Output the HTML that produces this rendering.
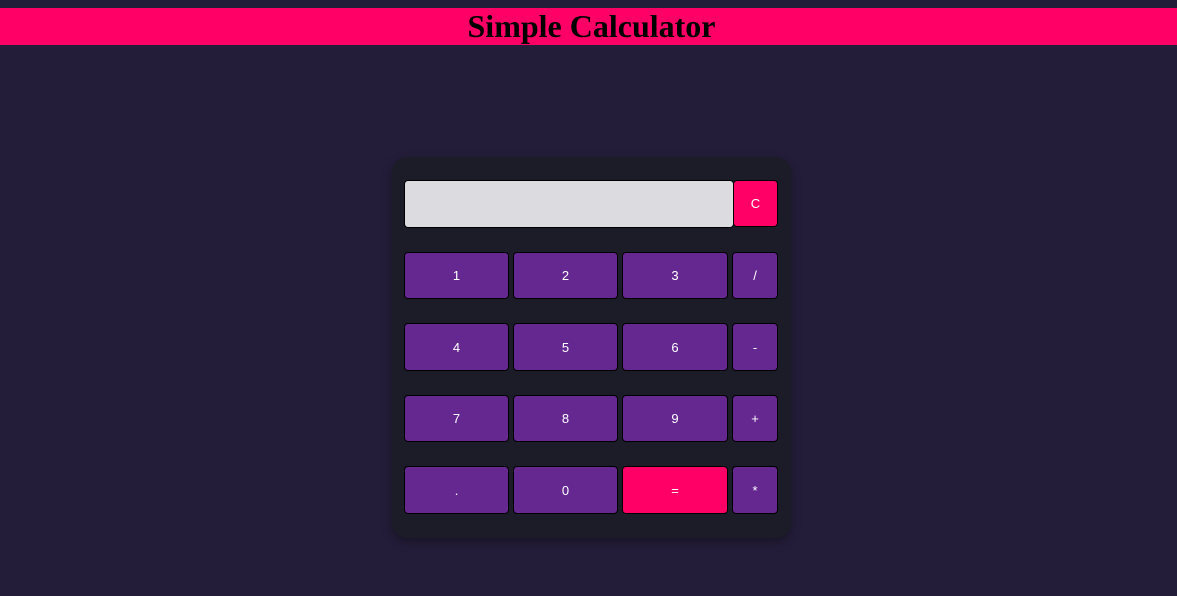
<!DOCTYPE html>
<html><head><style>
body{margin:0;background:#241d3a;width:1177px;height:596px;overflow:hidden;position:relative;font-family:"Liberation Sans",sans-serif}
.hd{position:absolute;left:0;top:8px;width:1177px;height:37px;background:#ff0066;text-align:center;font:bold 32px/37px "Liberation Serif",serif;color:#000;padding-left:6px;box-sizing:border-box}
.panel{position:absolute;left:392px;top:157px;width:399px;height:381px;background:#1b1c28;border-radius:15px;box-shadow:0 4px 10px rgba(0,0,0,.35)}
.b{position:absolute;box-sizing:border-box;border:1px solid #000;border-radius:4px;background:#652891;color:#fff;font-size:13px;display:flex;align-items:center;justify-content:center}
.p{background:#ff0066}
.disp{position:absolute;left:404px;top:180px;width:330px;height:48px;box-sizing:border-box;border:1px solid #000;border-radius:4px;background:#dcdbe0}
</style></head><body>
<div class="hd">Simple Calculator</div>
<div class="panel"></div>
<div class="disp"></div>
<div class="b p" style="left:733px;top:180px;width:45px;height:47px">C</div>
<div class="b" style="left:404px;top:252px;width:105px;height:47px">1</div>
<div class="b" style="left:513px;top:252px;width:105px;height:47px">2</div>
<div class="b" style="left:622px;top:252px;width:106px;height:47px">3</div>
<div class="b" style="left:732px;top:252px;width:46px;height:47px">/</div>
<div class="b" style="left:404px;top:323px;width:105px;height:48px">4</div>
<div class="b" style="left:513px;top:323px;width:105px;height:48px">5</div>
<div class="b" style="left:622px;top:323px;width:106px;height:48px">6</div>
<div class="b" style="left:732px;top:323px;width:46px;height:48px">-</div>
<div class="b" style="left:404px;top:395px;width:105px;height:47px">7</div>
<div class="b" style="left:513px;top:395px;width:105px;height:47px">8</div>
<div class="b" style="left:622px;top:395px;width:106px;height:47px">9</div>
<div class="b" style="left:732px;top:395px;width:46px;height:47px">+</div>
<div class="b" style="left:404px;top:466px;width:105px;height:48px">.</div>
<div class="b" style="left:513px;top:466px;width:105px;height:48px">0</div>
<div class="b p" style="left:622px;top:466px;width:106px;height:48px">=</div>
<div class="b" style="left:732px;top:466px;width:46px;height:48px">*</div>
</body></html>
